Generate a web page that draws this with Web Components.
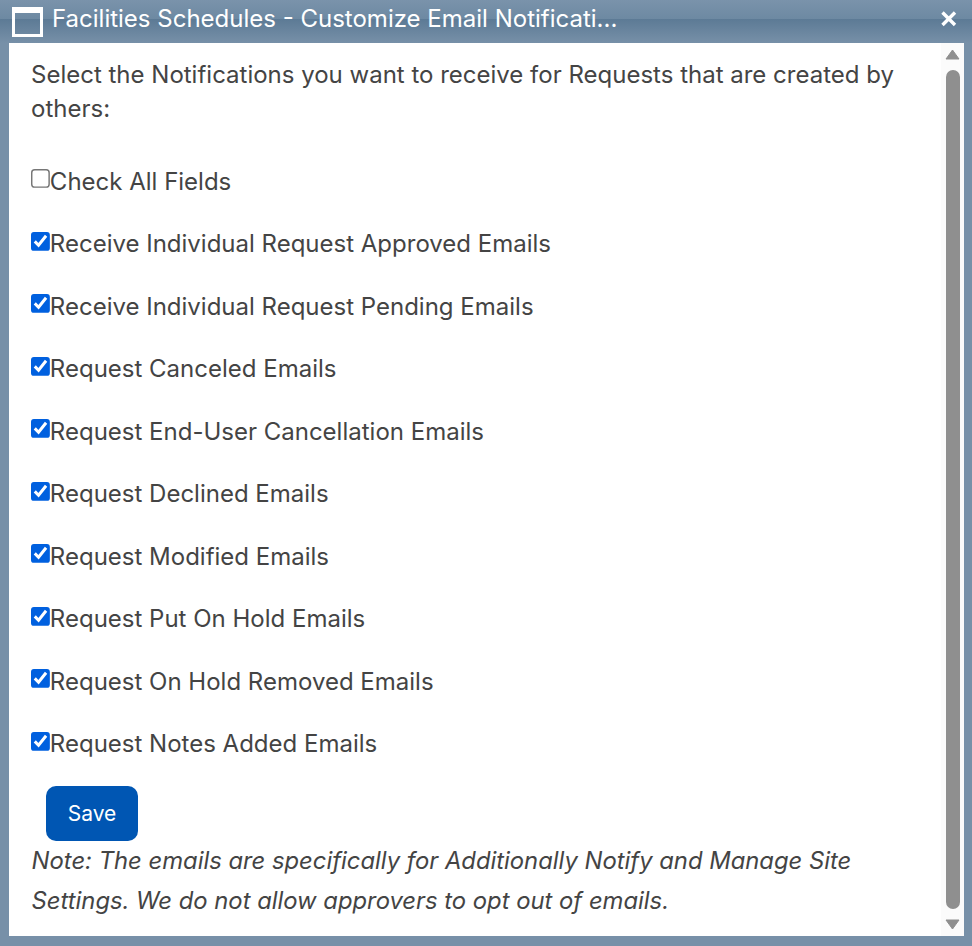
<!DOCTYPE html>
<html><head><meta charset="utf-8"><style>
html,body{margin:0;padding:0;height:946px;overflow:hidden;background:#7790a8}
body{font-family:Inter,"Noto Sans",sans-serif}
</style></head><body>
<dialog-window heading="Facilities Schedules - Customize Email Notificati...">
  <intro-text>Select the Notifications you want to receive for Requests that are created by others:</intro-text>
  <check-row>Check All Fields</check-row>
  <check-row checked>Receive Individual Request Approved Emails</check-row>
  <check-row checked>Receive Individual Request Pending Emails</check-row>
  <check-row checked>Request Canceled Emails</check-row>
  <check-row checked>Request End-User Cancellation Emails</check-row>
  <check-row checked>Request Declined Emails</check-row>
  <check-row checked>Request Modified Emails</check-row>
  <check-row checked>Request Put On Hold Emails</check-row>
  <check-row checked>Request On Hold Removed Emails</check-row>
  <check-row checked>Request Notes Added Emails</check-row>
  <save-button>Save</save-button>
  <note-text>Note: The emails are specifically for Additionally Notify and Manage Site Settings. We do not allow approvers to opt out of emails.</note-text>
</dialog-window>
<script>
function def(name, html, init){
  customElements.define(name, class extends HTMLElement{
    constructor(){super();this.attachShadow({mode:'open'}).innerHTML=html;}
    connectedCallback(){ if(init) init.call(this,this.shadowRoot); }
  });
}
def('dialog-window',`<style>
:host{display:flex;flex-direction:column;width:972px;height:946px;box-sizing:border-box;
 background:#7790a8;color:#444}
.bar{height:43px;flex:none;box-sizing:border-box;display:flex;align-items:center;padding:0 14px 5px 12px;color:#fff;
 background:linear-gradient(to bottom,#7a93ab 0,#6d89a2 19px,#5c7a95 19px,#7790a8 43px)}
.ico{width:31px;height:30px;box-sizing:border-box;border:3px solid #fff;border-top-width:6px;flex:none;margin-right:9px;margin-top:5px}
.t{font-size:24px;line-height:30px;flex:1;white-space:nowrap}
svg{display:block}
.wrap{flex:1;display:flex;margin:0 8px 10px 9px;background:#fff;min-height:0}
.content{flex:1;min-width:0;padding:15px 0 0 22px}
</style><div class="bar"><span class="ico"></span><span class="t"></span>
<svg width="18" height="18" viewBox="0 0 18 18"><path d="M2.5 2.5L15 15M15 2.5L2.5 15" stroke="#fff" stroke-width="3.4" fill="none"/></svg></div>
<div class="wrap"><div class="content"><slot></slot></div><scroll-rail></scroll-rail></div>`,
function(r){r.querySelector('.t').textContent=this.getAttribute('heading');});
def('scroll-rail',`<style>
:host{display:flex;flex-direction:column;align-items:center;width:23px;flex:none;background:#fbfbfb;box-sizing:border-box;padding:6px 0}
.th{flex:1;width:14px;border-radius:7px;background:#8f8f8f;margin:10px 0}
svg{display:block;flex:none}
</style><svg width="15" height="11" viewBox="0 0 15 11"><path d="M7.5 1L14 10H1Z" fill="#8f8f8f" stroke="#8f8f8f" stroke-linejoin="round"/></svg>
<div class="th"></div>
<svg width="15" height="11" viewBox="0 0 15 11"><path d="M1 1H14L7.5 10Z" fill="#8f8f8f" stroke="#8f8f8f" stroke-linejoin="round"/></svg>`);
def('intro-text',`<style>:host{display:block;font-size:24px;line-height:33.6px;width:880px;color:#444;margin-bottom:39.7px}</style><slot></slot>`);
def('check-row',`<style>:host{display:flex;align-items:center;height:33px;margin-bottom:29.5px;font-size:24px;line-height:33px;color:#444}
input{zoom:1.45;width:13px;height:13px;margin:0 0 3.4px 0;accent-color:#0060df;flex:none}</style><input type="checkbox" tabindex="-1"><slot></slot>`,
function(r){r.querySelector('input').checked=this.hasAttribute('checked');});
def('save-button',`<style>:host{display:block;margin:-3.4px 0 0 15px;width:max-content}
button{display:block;width:92px;height:55px;border:0;border-radius:10px;background:#0056b3;color:#fff;font:21px/1.5 Inter,sans-serif;padding:0}</style><button type="button"><slot></slot></button>`);
def('note-text',`<style>:host{display:block;font-size:23.8px;line-height:40px;font-style:italic;color:#444;width:880px;margin:0 0 0 .6px}</style><slot></slot>`);
</script>
</body></html>
